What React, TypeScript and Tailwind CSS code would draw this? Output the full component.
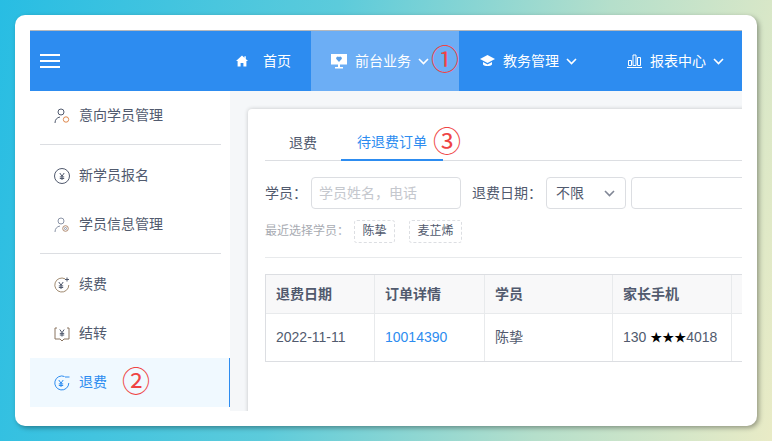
import type { ReactNode } from "react";

const font = "font-['Liberation_Sans','Noto_Sans_CJK_SC',sans-serif]";

function Chevron() {
  return (
    <svg width="11" height="7" viewBox="0 0 11 7" fill="none" stroke="currentColor" strokeWidth="1.6" className="shrink-0">
      <path d="M1 1l4.5 4.5L10 1" />
    </svg>
  );
}

function Yen({ x = 8, y = 8.5 }: { x?: number; y?: number }) {
  return (
    <path d={`M${x - 2.2} ${y - 3.5}l2.2 3.2 2.2-3.2M${x} ${y - 0.3}v3.8M${x - 2.2} ${y + 0.4}h4.4M${x - 2.2} ${y + 2}h4.4`} strokeWidth="1" />
  );
}

function IconPerson() {
  return (
    <svg width="16" height="16" viewBox="0 0 16 16" fill="none" stroke="#515a6e" strokeWidth="1">
      <circle cx="7" cy="4" r="3" />
      <path d="M1 15c0-3.5 2-5.5 5-6" />
      <circle cx="12" cy="11.5" r="2.7" stroke="#e08a50" />
    </svg>
  );
}

function IconPersonInfo() {
  return (
    <svg width="16" height="16" viewBox="0 0 16 16" fill="none" stroke="#8a93a6" strokeWidth="1">
      <circle cx="7" cy="4" r="3" />
      <path d="M1 15c0-3.5 2-5.5 5-6" />
      <circle cx="11.5" cy="11.5" r="2.8" stroke="#b08a70" />
      <circle cx="11.5" cy="11.5" r="1" />
    </svg>
  );
}

function IconYenCircle() {
  return (
    <svg width="16" height="16" viewBox="0 0 16 16" fill="none" stroke="#515a6e" strokeWidth="1">
      <circle cx="8" cy="8" r="7.5" />
      <Yen />
    </svg>
  );
}

function IconYenPlus() {
  return (
    <svg width="16" height="16" viewBox="0 0 16 16" fill="none" stroke="#515a6e" strokeWidth="1">
      <path d="M11 1.8A7 7 0 1 0 14.8 8" stroke="#a08a70" />
      <path d="M13 .5v4M11 2.5h4" />
      <Yen x={7} y={8.5} />
    </svg>
  );
}

function IconYenBox() {
  return (
    <svg width="16" height="16" viewBox="0 0 16 16" fill="none" stroke="#515a6e" strokeWidth="1">
      <path d="M3 2H1v11h5l2 2 2-2h5V2h-2" stroke="#8a7460" />
      <Yen x={8} y={7} />
    </svg>
  );
}

function IconYenMinus() {
  return (
    <svg width="16" height="16" viewBox="0 0 16 16" fill="none" stroke="#2d8cf0" strokeWidth="1">
      <path d="M10.5 1.5A7 7 0 1 0 14.8 8" />
      <path d="M11 2h4.5" />
      <Yen x={7} y={8.5} />
    </svg>
  );
}

function NavItem({ icon, label, chevron, active, annotation, className }: { icon: ReactNode; label: string; chevron?: boolean; active?: boolean; annotation?: string; className: string }) {
  return (
    <div className={`relative flex h-full shrink-0 items-center text-[14px] text-white ${active ? "bg-[#6caef5]" : ""} ${className}`}>
      {icon}
      <span className={chevron ? "ml-2" : "ml-[15px]"}>{label}</span>
      {chevron && (
        <span className="ml-[7px]">
          <Chevron />
        </span>
      )}
      {annotation && <span className="ml-[2px] text-[28px] leading-none text-[#ef4444]">{annotation}</span>}
    </div>
  );
}

function SideItem({ icon, label, active, annotation }: { icon: ReactNode; label: string; active?: boolean; annotation?: string }) {
  return (
    <div className={`flex h-[49px] items-center pl-6 text-[14px] ${active ? "border-r border-[#2d8cf0] bg-[#f0f9ff] text-[#2d8cf0]" : "text-[#515a6e]"}`}>
      <span className="flex w-[25px] shrink-0">{icon}</span>
      <span>{label}</span>
      {annotation && <span className="ml-[15px] text-[28px] leading-none text-[#ef4444]">{annotation}</span>}
    </div>
  );
}

function Cell({ w, children, head, last }: { w: string; children?: ReactNode; head?: boolean; last?: boolean }) {
  return (
    <div className={`flex shrink-0 items-center px-[10px] ${w} ${last ? "" : "border-r border-[#e8eaec]"} ${head ? "font-bold" : ""}`}>
      {children}
    </div>
  );
}

export default function App() {
  return (
    <div className={`h-[441px] w-[772px] overflow-hidden bg-[linear-gradient(100deg,#28bde3_0%,#5ccbdb_40%,#b5dfcb_72%,#e9ebc6_100%)] p-[15px] ${font}`}>
      <div className="h-[411px] rounded-[10px] bg-white p-[15px] shadow-[2px_2px_5px_rgba(0,0,0,0.35)]">
        <div className="h-[381px] overflow-hidden border-t border-[#b5b8bc]">
          <div className="flex h-[60px] items-center bg-[#2d8cf0]">
            <div className="ml-[10px] flex w-[196px] shrink-0 flex-col gap-[3.5px]">
              <span className="h-[2.5px] w-5 bg-white" />
              <span className="h-[2.5px] w-5 bg-white" />
              <span className="h-[2.5px] w-5 bg-white" />
            </div>
            <NavItem
              className="w-[75px]"
              label="首页"
              icon={
                <svg width="12" height="12" viewBox="0 0 12 12" fill="white">
                  <path d="M6 .5L0 6h1.6v5.5h3V8h2.8v3.5h3V6H12L9.8 4V1.2H8.4v1.5z" />
                </svg>
              }
            />
            <NavItem
              className="w-[148px] pl-5"
              label="前台业务"
              chevron
              active
              annotation="①"
              icon={
                <svg width="16" height="16" viewBox="0 0 16 16">
                  <path fill="white" d="M0 1h16v10.500H0zM7 11.500h2V14h3v1.500H4V14h3z" />
                  <path fill="#5a9fe8" d="M8 9L5.300 6.100a1.700 1.700 0 0 1 2.700-2 1.700 1.700 0 0 1 2.700 2z" />
                </svg>
              }
            />
            <NavItem
              className="w-[168px] pl-[21px]"
              label="教务管理"
              chevron
              icon={
                <svg width="15" height="12" viewBox="0 0 15 12" fill="white">
                  <path d="M7.500 0L15 4 7.500 8 0 4z" />
                  <path d="M3 7l4.500 2.400L12 7v2.500C10.500 11.500 4.500 11.500 3 9.500z" />
                </svg>
              }
            />
            <NavItem
              className="w-[115px]"
              label="报表中心"
              chevron
              icon={
                <svg width="15" height="14" viewBox="0 0 15 14" fill="none" stroke="white" strokeWidth="1">
                  <path d="M1.500 6.500h3v5h-3zM6 1h3v10.500H6zM10.500 3.500h3v8h-3z" />
                  <path d="M0 13.500h15" />
                </svg>
              }
            />
          </div>
          <div className="flex h-[320px]">
            <div className="w-[200px] shrink-0 bg-white">
              <SideItem icon={<IconPerson />} label="意向学员管理" />
              <div className="mt-1 mb-[6px] ml-[10px] h-px w-[181px] bg-[#dcdee2]" />
              <SideItem icon={<IconYenCircle />} label="新学员报名" />
              <SideItem icon={<IconPersonInfo />} label="学员信息管理" />
              <div className="mt-1 mb-[6px] ml-[10px] h-px w-[181px] bg-[#dcdee2]" />
              <SideItem icon={<IconYenPlus />} label="续费" />
              <SideItem icon={<IconYenBox />} label="结转" />
              <SideItem icon={<IconYenMinus />} label="退费" active annotation="②" />
            </div>
            <div className="min-w-0 flex-1 bg-[#f5f7f9] pt-[18px] pl-[18px]">
              <div className="h-[320px] w-[560px] rounded-tl-[4px] bg-white pt-4 pl-[17px] text-[14px] text-[#515a6e] shadow-[0_0_4px_rgba(0,0,0,0.2)]">
                <div className="flex h-9 border-b border-[#dcdee2]">
                  <div className="flex h-9 w-[76px] items-center justify-center">退费</div>
                  <div className="flex h-9 w-[102px] items-center justify-center border-b-2 border-[#2d8cf0] text-[#2d8cf0]">待退费订单</div>
                  <span className="ml-[-10px] self-center text-[28px] leading-none text-[#ef4444]">③</span>
                </div>
                <div className="mt-4 flex h-8 items-center">
                  <span className="w-[46px]">学员：</span>
                  <div className="flex h-8 w-[150px] items-center rounded-[4px] border border-[#dcdee2] px-[7px] text-[#c5c8ce]">学员姓名，电话</div>
                  <span className="ml-[11px] w-[74px]">退费日期：</span>
                  <div className="flex h-8 w-[80px] items-center justify-between rounded-[4px] border border-[#dcdee2] pr-[10px] pl-[9px]">
                    不限
                    <span className="text-[#808695]">
                      <Chevron />
                    </span>
                  </div>
                  <div className="ml-[5px] flex h-8 w-[130px] items-center justify-end rounded-[4px] border border-[#dcdee2] pr-[4px] text-[#c5c8ce]">
                    <svg width="13" height="13" viewBox="0 0 13 13" fill="none" stroke="currentColor" strokeWidth="1">
                      <path d="M.5 2h12v10.500H.5zM.5 5h12M3.500 0v3M9.500 0v3" />
                    </svg>
                  </div>
                </div>
                <div className="mt-[10px] flex h-[24px] items-center text-[12px] text-[#a8abb2]">
                  <span className="w-[89px]">最近选择学员：</span>
                  <span className="flex h-[23px] w-[41px] items-center justify-center rounded-[3px] border border-dashed border-[#dcdee2] text-[#515a6e]">陈挚</span>
                  <span className="ml-[14px] flex h-[23px] w-[53px] items-center justify-center rounded-[3px] border border-dashed border-[#dcdee2] text-[#515a6e]">麦芷烯</span>
                </div>
                <div className="mt-[14px] h-px bg-[#e8eaec]" />
                <div className="mt-4 border border-[#dcdee2]">
                  <div className="flex h-[39px] border-b border-[#e8eaec] bg-[#f8f8f9]">
                    <Cell w="w-[109px]" head>退费日期</Cell>
                    <Cell w="w-[110px]" head>订单详情</Cell>
                    <Cell w="w-[128px]" head>学员</Cell>
                    <Cell w="w-[119px]" head>家长手机</Cell>
                    <Cell w="w-[20px]" last />
                  </div>
                  <div className="flex h-[47px]">
                    <Cell w="w-[109px]">2022-11-11</Cell>
                    <Cell w="w-[110px]">
                      <span className="text-[#2d8cf0]">10014390</span>
                    </Cell>
                    <Cell w="w-[128px]">陈挚</Cell>
                    <Cell w="w-[119px]">
                      130&nbsp;<span className="text-[12px] text-black">★★★</span>4018
                    </Cell>
                    <Cell w="w-[20px]" last />
                  </div>
                </div>
              </div>
            </div>
          </div>
        </div>
      </div>
    </div>
  );
}
